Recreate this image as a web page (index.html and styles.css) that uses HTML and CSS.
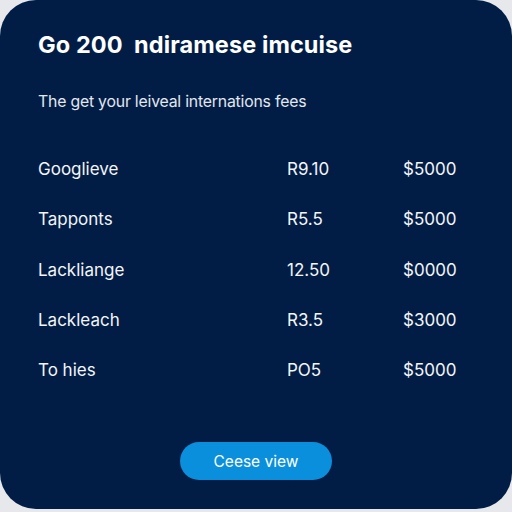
FILE: index.html
```html
<!DOCTYPE html>
<html>
<head>
<meta charset="utf-8">
<link rel="stylesheet" href="styles.css">
</head>
<body>
<div class="card">
  <h1 class="title">Go 200 &nbsp;ndiramese imcuise</h1>
  <p class="subtitle">The get your leiveal internations fees</p>
  <div class="rows">
    <div class="row"><span>Googlieve</span><span>R9.10</span><span>$5000</span></div>
    <div class="row"><span>Tapponts</span><span>R5.5</span><span>$5000</span></div>
    <div class="row"><span>Lackliange</span><span>12.50</span><span>$0000</span></div>
    <div class="row"><span>Lackleach</span><span>R3.5</span><span>$3000</span></div>
    <div class="row"><span>To hies</span><span>PO5</span><span>$5000</span></div>
  </div>
  <div class="actions"><button class="btn">Ceese view</button></div>
</div>
</body>
</html>
```
FILE: styles.css
```css
html, body {
  margin: 0;
  padding: 0;
  background: #e6e8ec;
}
body {
  width: 512px;
  height: 512px;
  overflow: hidden;
  font-family: Inter, "Noto Sans", sans-serif;
}
.card {
  box-sizing: border-box;
  width: 512px;
  height: 509px;
  background: #011d45;
  border-radius: 36px;
  padding: 30px 0 0 38px;
  color: #ffffff;
  display: flex;
  flex-direction: column;
}
.title {
  margin: 0;
  font-size: 23.5px;
  line-height: 30px;
  font-weight: 700;
  letter-spacing: 0.1px;
}
.subtitle {
  margin: 32px 0 0;
  font-size: 15.8px;
  line-height: 20px;
  color: #e3e7ef;
  letter-spacing: -0.2px;
}
.rows {
  margin-top: 47px;
  display: flex;
  flex-direction: column;
  gap: 30px;
}
.row {
  display: grid;
  grid-template-columns: 249px 116px auto;
  font-size: 17px;
  line-height: 20.3px;
  color: #f3f5f9;
}
.actions {
  margin-top: auto;
  margin-bottom: 29px;
  display: flex;
  justify-content: center;
  padding-right: 38px;
}
.btn {
  width: 152px;
  height: 38px;
  border: none;
  border-radius: 19px;
  background: #0a8fdc;
  color: #ffffff;
  font-family: Inter, "Noto Sans", sans-serif;
  font-size: 15.5px;
}
```
